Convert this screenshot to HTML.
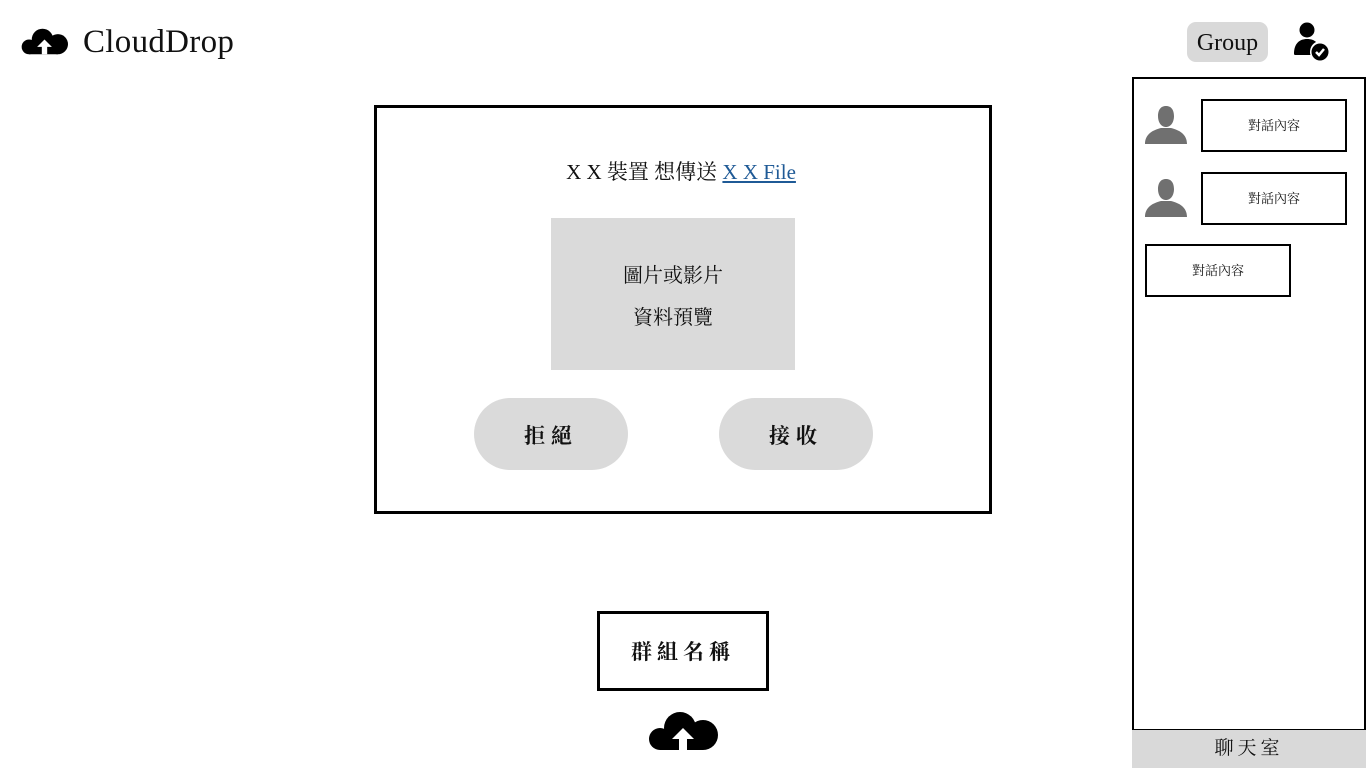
<!DOCTYPE html>
<html><head><meta charset="utf-8"><style>
*{margin:0;padding:0;box-sizing:border-box}
body{width:1366px;height:768px;background:#fff;position:relative;overflow:hidden;font-family:"Liberation Serif","Noto Serif CJK SC","Noto Sans CJK TC",serif;color:#111}
.a{position:absolute}
.brand{left:83px;top:22px;font-size:33px;line-height:40px;letter-spacing:0.3px}
.grp{left:1187px;top:22px;width:81px;height:40px;background:#d9d9d9;border-radius:9px;font-size:24px;line-height:42px;text-align:center}
.side{left:1132px;top:77px;width:234px;height:654px;border:2px solid #000}
.chat{left:1132px;top:730px;width:234px;height:38px;background:#d9d9d9;font-size:19px;line-height:38px;text-align:center;letter-spacing:4px}
.bub{border:2px solid #000;font-size:13px;text-align:center;line-height:50px;height:53px}
.main{left:374px;top:105px;width:618px;height:409px;border:3px solid #000}
.title{left:372px;top:157px;width:618px;text-align:center;font-size:21px;line-height:30px}
.title a{color:#1f5a96;text-decoration:underline}
.prev{left:551px;top:218px;width:244px;height:152px;background:#dadada;text-align:center;font-size:20px;line-height:42px;padding-top:37px}
.btn{top:398px;width:154px;height:72px;border-radius:36px;background:#dadada;font-size:21px;line-height:76px;text-align:center;letter-spacing:6px;font-weight:bold}
.gname{left:597px;top:611px;width:172px;height:80px;border:3px solid #000;font-size:21px;line-height:76px;text-align:center;letter-spacing:5px;font-weight:bold}
</style></head><body>
<svg class="a" style="left:21px;top:28px" width="47" height="27" viewBox="0 0 70 38">
<circle cx="12" cy="27" r="11"/><circle cx="32" cy="16" r="16"/><circle cx="55" cy="23" r="15"/><rect x="12" y="18" width="43" height="20"/>
<path d="M35 16 L46 27 L39 27 L39 38 L31 38 L31 27 L24 27Z" fill="#fff"/></svg>
<div class="a brand">CloudDrop</div>
<div class="a grp">Group</div>
<svg class="a" style="left:1292px;top:21px" width="38" height="40" viewBox="0 0 38 40">
<circle cx="15" cy="9" r="7.5"/><path d="M2 33 C2 22 8 18 15 18 C19 18 22 19 24 21 C20 23 18 27 18 31 C18 32 18 33 18.5 34 L4 34 Q2 34 2 33Z"/>
<circle cx="28" cy="31" r="8.5"/><path d="M24 31 L27 34 L32 28" stroke="#fff" stroke-width="2.5" fill="none"/></svg>
<div class="a side"></div>
<svg class="a" style="left:1145px;top:106px" width="42" height="38" viewBox="0 0 42 38"><path d="M21 0 C27 0 29 5 29 10 C29 16 26 21 21 21 C16 21 13 16 13 10 C13 5 15 0 21 0Z M16 22 L26 22 C34 24 42 28 42 38 L0 38 C0 28 8 24 16 22Z" fill="#707070"/></svg>
<svg class="a" style="left:1145px;top:179px" width="42" height="38" viewBox="0 0 42 38"><path d="M21 0 C27 0 29 5 29 10 C29 16 26 21 21 21 C16 21 13 16 13 10 C13 5 15 0 21 0Z M16 22 L26 22 C34 24 42 28 42 38 L0 38 C0 28 8 24 16 22Z" fill="#707070"/></svg>
<div class="a bub" style="left:1201px;top:99px;width:146px">對話內容</div>
<div class="a bub" style="left:1201px;top:172px;width:146px">對話內容</div>
<div class="a bub" style="left:1145px;top:244px;width:146px">對話內容</div>
<div class="a chat">聊天室</div>
<div class="a main"></div>
<div class="a title">X X 裝置 想傳送 <a>X X File</a></div>
<div class="a prev">圖片或影片<br>資料預覽</div>
<div class="a btn" style="left:474px">拒絕</div>
<div class="a btn" style="left:719px">接收</div>
<div class="a gname">群組名稱</div>
<svg class="a" style="left:648px;top:712px" width="70" height="38" viewBox="0 0 70 38">
<circle cx="12" cy="27" r="11"/><circle cx="32" cy="16" r="16"/><circle cx="55" cy="23" r="15"/><rect x="12" y="18" width="43" height="20"/>
<path d="M35 16 L46 27 L39 27 L39 38 L31 38 L31 27 L24 27Z" fill="#fff"/></svg>
</body></html>
